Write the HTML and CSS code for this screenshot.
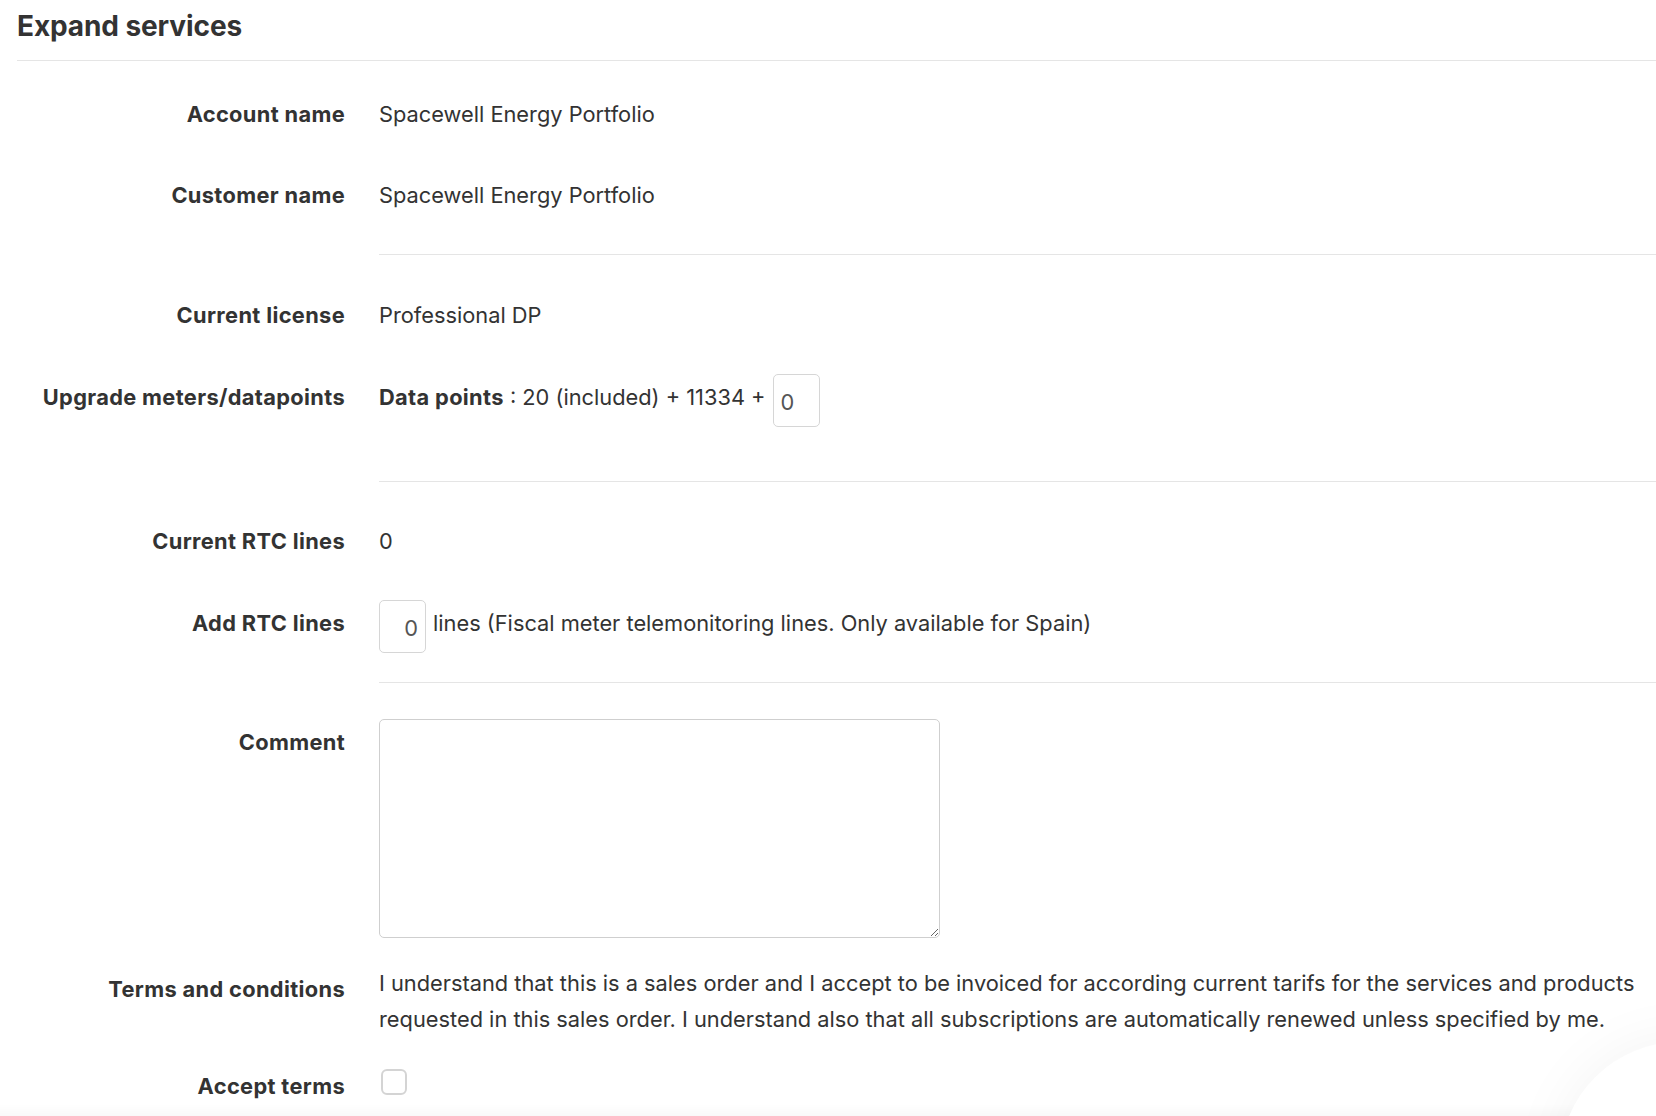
FILE: index.html
```html
<!DOCTYPE html>
<html lang="en">
<head>
<meta charset="utf-8">
<title>Expand services</title>
<link rel="stylesheet" href="styles.css">
</head>
<body>
<div class="page">
  <h1 class="title">Expand services</h1>
  <form class="form">
    <div class="row r1">
      <div class="label">Account name</div>
      <div class="value">Spacewell Energy Portfolio</div>
    </div>
    <div class="row r2">
      <div class="label">Customer name</div>
      <div class="value">Spacewell Energy Portfolio</div>
    </div>
    <hr class="sep s1">
    <div class="row r3">
      <div class="label">Current license</div>
      <div class="value">Professional DP</div>
    </div>
    <div class="row r4 center">
      <div class="label lift">Upgrade meters/datapoints</div>
      <div class="value inline"><span class="lift"><b class="strong">Data points</b> : 20 (included) + 11334 +</span><input class="num num-left" type="text" value="0"></div>
    </div>
    <hr class="sep s2">
    <div class="row r5">
      <div class="label">Current RTC lines</div>
      <div class="value">0</div>
    </div>
    <div class="row r6 center">
      <div class="label lift">Add RTC lines</div>
      <div class="value inline"><input class="num num-right" type="text" value="0"><span class="lift">lines (Fiscal meter telemonitoring lines. Only available for Spain)</span></div>
    </div>
    <hr class="sep s3">
    <div class="row r7">
      <div class="label lab-pad">Comment</div>
      <div class="value"><textarea class="comment"></textarea></div>
    </div>
    <div class="row r8">
      <div class="label lab-pad">Terms and conditions</div>
      <div class="value terms">I understand that this is a sales order and I accept to be invoiced for according current tarifs for the services and products requested in this sales order. I understand also that all subscriptions are automatically renewed unless specified by me.</div>
    </div>
    <div class="row r9">
      <div class="label">Accept terms</div>
      <div class="value"><span class="check"></span></div>
    </div>
  </form>
</div>
<div class="fade"></div>
<div class="bubble"></div>
</body>
</html>
```
FILE: styles.css
```css
html, body {
  margin: 0;
  padding: 0;
  background: #fff;
  height: 100%;
  overflow: hidden;
}
body {
  font-family: Inter, "Noto Sans", sans-serif;
  color: #333;
  font-size: 21.8px;
}
.page {
  padding-left: 17px;
}
.title {
  margin: 9px 0 0;
  padding-bottom: 17px;
  font-size: 28px;
  line-height: 34px;
  font-weight: 700;
  border-bottom: 1px solid #e5e5e5;
  letter-spacing: -0.1px;
}
.form {
  display: block;
}
.row {
  display: flex;
  align-items: flex-start;
}
.row.center {
  align-items: center;
}
.label {
  width: 328px;
  flex: none;
  text-align: right;
  font-weight: 700;
  line-height: 34px;
  padding-bottom: 2px;
  letter-spacing: 0.35px;
}
.strong {
  font-weight: 700;
  letter-spacing: 0.35px;
}
.value {
  margin-left: 34px;
  line-height: 34px;
  padding-bottom: 2px;
  flex: 1;
  min-width: 0;
}
.value.inline {
  display: flex;
  align-items: center;
  padding-bottom: 0;
}
.lift {
  padding-bottom: 7px;
}
.lab-pad {
  padding-top: 6px;
}
.r1 { margin-top: 36px; }
.r2 { margin-top: 45px; }
.sep {
  margin: 40px 0 0 362px;
  border: 0;
  border-top: 1px solid #e5e5e5;
  height: 0;
}
.r3 { margin-top: 43px; }
.r4 { margin-top: 40px; }
.s2 { margin-top: 54px; }
.r5 { margin-top: 42px; }
.r6 { margin-top: 40px; }
.s3 { margin-top: 29px; }
.r7 { margin-top: 36px; }
.r8 { margin-top: 26px; }
.r9 { margin-top: 32px; }
.num {
  box-sizing: border-box;
  width: 47px;
  height: 53px;
  border: 1px solid #d6d6d6;
  border-radius: 5px;
  font-family: Inter, "Noto Sans", sans-serif;
  font-size: 21.8px;
  color: #555;
  padding: 0 7px;
  margin: 0;
  background: #fff;
  outline: none;
}
.num-left {
  margin-left: 7px;
  text-align: left;
  padding-top: 3px;
}
.num-right {
  text-align: right;
  margin-right: 7px;
  padding-right: 7px;
  padding-top: 3px;
}
.comment {
  display: block;
  box-sizing: border-box;
  width: 561px;
  height: 219px;
  border: 1px solid #cfcfcf;
  border-radius: 5px;
  margin: 0;
  resize: both;
  font-family: Inter, "Noto Sans", sans-serif;
}
.value.terms {
  padding-right: 10px;
  line-height: 36px;
  padding-bottom: 0;
  margin-top: -1px;
}
.check {
  display: block;
  box-sizing: border-box;
  width: 26px;
  height: 26px;
  margin: 0 0 0 2px;
  border: 2px solid #d4d4d4;
  border-radius: 6px;
  background: #fff;
}
.fade {
  position: fixed;
  left: 0;
  right: 0;
  bottom: 0;
  height: 12px;
  background: linear-gradient(to bottom, rgba(0,0,0,0), rgba(0,0,0,0.025));
  pointer-events: none;
}
.bubble {
  position: fixed;
  left: 1560px;
  top: 1042px;
  width: 240px;
  height: 240px;
  border-radius: 50%;
  background: #fff;
  box-shadow: 0 0 60px rgba(0,0,0,0.05);
}
```
